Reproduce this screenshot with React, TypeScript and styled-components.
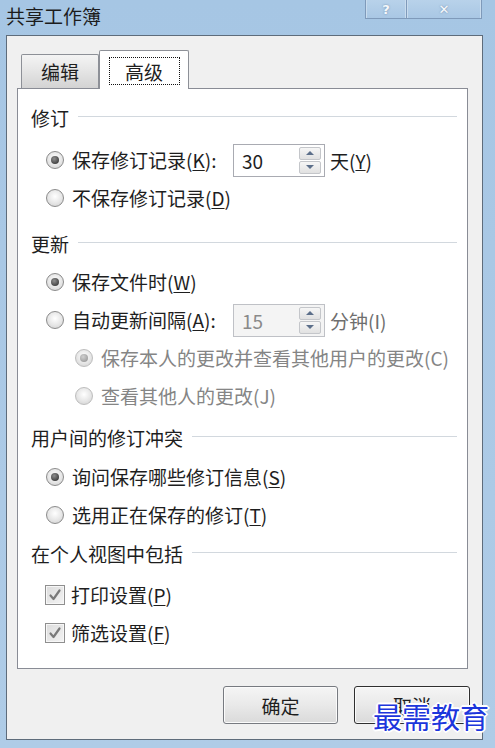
import styled, { createGlobalStyle } from "styled-components";

const GlobalStyle = createGlobalStyle`
  html, body {
    margin: 0;
    padding: 0;
  }
  body {
    background: #a9c8e5;
    font-family: "Noto Sans CJK SC", "Liberation Sans", sans-serif;
  }
`;

const Window = styled.div`
  position: relative;
  width: 495px;
  height: 748px;
  display: flex;
  flex-direction: column;
  background: linear-gradient(#a6c6e4, #afcce7);
  overflow: hidden;
`;

const TitleBar = styled.div`
  height: 35px;
  display: flex;
  justify-content: space-between;
  align-items: flex-start;
  flex: none;
`;

const Title = styled.div`
  margin: 6px 0 0 6px;
  font-size: 19px;
  line-height: 20px;
  color: #1c1c1c;
`;

const CaptionButtons = styled.div`
  display: flex;
  margin-right: 13px;
`;

const CaptionButton = styled.div<{ $w: number }>`
  width: ${(p) => p.$w}px;
  height: 19px;
  box-sizing: border-box;
  border: 1px solid #7f9aba;
  border-top: none;
  margin-left: -1px;
  background: linear-gradient(#b8d2ea, #a9c7e4);
  box-shadow: inset 1px 0 0 #c9dcee, inset -1px 0 0 #c9dcee;
  display: flex;
  align-items: center;
  justify-content: center;
  font-family: "DejaVu Sans", sans-serif;
  font-size: 13px;
  font-weight: bold;
  color: #f6f9fc;
  text-shadow: 0 0 2px #6d87a6;
`;

const Frame = styled.div`
  flex: 1;
  margin: 0 12px 8px 6px;
  border: 1px solid #5e6c7b;
  background: #f0f0f0;
  padding: 14px 14px 15px 10px;
  display: flex;
  flex-direction: column;
`;

const TabStrip = styled.div`
  height: 38px;
  display: flex;
  align-items: flex-end;
  padding-left: 4px;
  flex: none;
`;

const Tab = styled.div<{ $active?: boolean }>`
  position: relative;
  box-sizing: border-box;
  width: ${(p) => (p.$active ? 90 : 78)}px;
  height: ${(p) => (p.$active ? 39 : 34)}px;
  margin-bottom: ${(p) => (p.$active ? -1 : 0)}px;
  z-index: ${(p) => (p.$active ? 1 : 0)};
  border: 1px solid #8d9097;
  border-bottom: none;
  border-radius: 2px 2px 0 0;
  background: ${(p) =>
    p.$active ? "#ffffff" : "linear-gradient(#f4f4f4, #e6e6e6 45%, #d3d3d3)"};
  display: flex;
  justify-content: center;
  align-items: ${(p) => (p.$active ? "flex-start" : "center")};
  padding-top: ${(p) => (p.$active ? 6 : 0)}px;
  font-size: 19px;
  color: #1e1e1e;
`;

const FocusBox = styled.span`
  width: 71px;
  height: 28px;
  box-sizing: border-box;
  border: 1px dotted #111;
  display: flex;
  align-items: center;
  justify-content: center;
`;

const Panel = styled.div`
  height: 581px;
  box-sizing: border-box;
  flex: none;
  border: 1px solid #898c95;
  background: #ffffff;
  padding: 14px 10px 0 13px;
`;

const Section = styled.div<{ $top: number; $lead: number }>`
  margin-top: ${(p) => p.$top}px;
  & > div:nth-child(2) {
    margin-top: ${(p) => p.$lead}px;
  }
`;

const Heading = styled.div`
  height: 28px;
  display: flex;
  align-items: center;
  font-size: 19px;
  color: #1e1e1e;
  &::after {
    content: "";
    flex: 1;
    height: 1px;
    margin: 0 0 1px 9px;
    background: #d2d8de;
  }
`;

const OptionRow = styled.div<{ $indent: number }>`
  height: 38px;
  display: flex;
  align-items: center;
  padding-left: ${(p) => p.$indent}px;
`;

const RadioCircle = styled.span<{ $checked?: boolean; $disabled?: boolean }>`
  width: 18px;
  height: 18px;
  flex: none;
  box-sizing: border-box;
  border-radius: 50%;
  border: 1px solid ${(p) => (p.$disabled ? "#bdbdbd" : "#8b8b8b")};
  background: radial-gradient(circle at 50% 40%, #ffffff, #e6e6e6 55%, #cdcdcd);
  display: flex;
  align-items: center;
  justify-content: center;
  &::after {
    content: "";
    display: ${(p) => (p.$checked ? "block" : "none")};
    width: 8px;
    height: 8px;
    border-radius: 50%;
    background: ${(p) =>
      p.$disabled
        ? "radial-gradient(circle at 40% 35%, #d0d0d0, #8e8e8e)"
        : "radial-gradient(circle at 40% 35%, #8f8f8f, #262626)"};
  }
`;

const CheckBox = styled.span`
  width: 20px;
  height: 20px;
  flex: none;
  box-sizing: border-box;
  border: 1px solid #8f8f8f;
  background: linear-gradient(135deg, #dcdcdc, #f3f3f3);
  box-shadow: inset 0 0 0 1px #f7f7f7;
  display: flex;
  align-items: center;
  justify-content: center;
`;

const Label = styled.span<{ $width?: number; $muted?: boolean; $gap?: number }>`
  margin-left: ${(p) => p.$gap ?? 8}px;
  width: ${(p) => (p.$width ? `${p.$width}px` : "auto")};
  flex: none;
  font-size: 19px;
  line-height: 24px;
  white-space: nowrap;
  color: ${(p) => (p.$muted ? "#858585" : "#1e1e1e")};
  u {
    text-underline-offset: 2px;
  }
`;

const Spinner = styled.div<{ $disabled?: boolean }>`
  width: 92px;
  height: 33px;
  box-sizing: border-box;
  flex: none;
  border: 1px solid ${(p) => (p.$disabled ? "#bfc1c6" : "#a9abb2")};
  background: ${(p) => (p.$disabled ? "#f4f4f4" : "#ffffff")};
  display: flex;
  align-items: center;
  padding: 2px;
`;

const SpinValue = styled.span<{ $disabled?: boolean }>`
  flex: 1;
  padding-left: 6px;
  font-size: 19px;
  color: ${(p) => (p.$disabled ? "#8a8a8a" : "#1e1e1e")};
`;

const SpinButtons = styled.div`
  width: 22px;
  height: 27px;
  display: flex;
  flex-direction: column;
  gap: 1px;
  margin-right: 1px;
`;

const SpinButton = styled.div<{ $down?: boolean }>`
  flex: 1;
  box-sizing: border-box;
  border: 1px solid #c4c6ca;
  border-radius: 2px;
  background: linear-gradient(#f6f6f6, #e1e1e1);
  display: flex;
  align-items: center;
  justify-content: center;
  &::after {
    content: "";
    width: 0;
    height: 0;
    border-left: 4px solid transparent;
    border-right: 4px solid transparent;
    ${(p) =>
      p.$down ? "border-top: 4px solid #5c6f8a;" : "border-bottom: 4px solid #5c6f8a;"}
  }
`;

const Unit = styled.span<{ $muted?: boolean }>`
  margin-left: 5px;
  font-size: 19px;
  white-space: nowrap;
  color: ${(p) => (p.$muted ? "#6e6e6e" : "#1e1e1e")};
`;

const ButtonRow = styled.div`
  display: flex;
  justify-content: flex-end;
  gap: 16px;
  margin: 17px -2px 0 0;
`;

const DialogButton = styled.div<{ $default?: boolean }>`
  width: ${(p) => (p.$default ? 116 : 115)}px;
  height: 38px;
  box-sizing: border-box;
  border: 1px solid ${(p) => (p.$default ? "#2f2f2f" : "#777a80")};
  border-radius: 3px;
  background: linear-gradient(#f5f5f5, #e9e9e9 50%, #dadada);
  box-shadow: inset 0 0 0 1px #fbfbfb;
  display: flex;
  align-items: center;
  justify-content: center;
  font-size: 19px;
  color: #1e1e1e;
`;

const Watermark = styled.div`
  position: absolute;
  left: 373px;
  top: 698px;
  font-size: 29px;
  line-height: 36px;
  letter-spacing: 0px;
  color: #1c36dc;
  text-shadow: 1px 1px 0 #fff, -1px -1px 0 #fff, 1px -1px 0 #fff, -1px 1px 0 #fff,
    2px 0 0 #fff, -2px 0 0 #fff, 0 2px 0 #fff, 0 -2px 0 #fff;
`;

type RadioProps = {
  checked?: boolean;
  disabled?: boolean;
  indent?: number;
  children: React.ReactNode;
};

const Radio = ({ checked, disabled, indent = 15, children }: RadioProps) => (
  <OptionRow $indent={indent}>
    <RadioCircle $checked={checked} $disabled={disabled} />
    <Label $muted={disabled}>{children}</Label>
  </OptionRow>
);

const Check = ({ children }: { children: React.ReactNode }) => (
  <OptionRow $indent={14}>
    <CheckBox>
      <svg width="14" height="14" viewBox="0 0 14 14">
        <path
          d="M2.5 7.5 L5.5 11 L11.5 2.5"
          fill="none"
          stroke="#7a7a7a"
          strokeWidth="2.2"
          strokeLinecap="round"
          strokeLinejoin="round"
        />
      </svg>
    </CheckBox>
    <Label $gap={6}>{children}</Label>
  </OptionRow>
);

const SpinBox = ({ value, disabled }: { value: string; disabled?: boolean }) => (
  <Spinner $disabled={disabled}>
    <SpinValue $disabled={disabled}>{value}</SpinValue>
    <SpinButtons>
      <SpinButton />
      <SpinButton $down />
    </SpinButtons>
  </Spinner>
);

const App = () => {
  return (
    <>
      <GlobalStyle />
      <Window>
        <TitleBar>
          <Title>共享工作簿</Title>
          <CaptionButtons>
            <CaptionButton $w={42}>?</CaptionButton>
            <CaptionButton $w={76}>✕</CaptionButton>
          </CaptionButtons>
        </TitleBar>

        <Frame>
          <TabStrip>
            <Tab>编辑</Tab>
            <Tab $active>
              <FocusBox>高级</FocusBox>
            </Tab>
          </TabStrip>

          <Panel>
            <Section $top={0} $lead={10}>
              <Heading>修订</Heading>
              <OptionRow $indent={15}>
                <RadioCircle $checked />
                <Label $width={161}>
                  保存修订记录(<u>K</u>):
                </Label>
                <SpinBox value="30" />
                <Unit>
                  天(<u>Y</u>)
                </Unit>
              </OptionRow>
              <Radio>
                不保存修订记录(<u>D</u>)
              </Radio>
            </Section>

            <Section $top={12} $lead={6}>
              <Heading>更新</Heading>
              <Radio checked>
                保存文件时(<u>W</u>)
              </Radio>
              <OptionRow $indent={15}>
                <RadioCircle />
                <Label $width={161}>
                  自动更新间隔(<u>A</u>):
                </Label>
                <SpinBox value="15" disabled />
                <Unit $muted>分钟(I)</Unit>
              </OptionRow>
              <Radio checked disabled indent={44}>
                保存本人的更改并查看其他用户的更改(C)
              </Radio>
              <Radio disabled indent={44}>
                查看其他人的更改(J)
              </Radio>
            </Section>

            <Section $top={8} $lead={7}>
              <Heading>用户间的修订冲突</Heading>
              <Radio checked>
                询问保存哪些修订信息(<u>S</u>)
              </Radio>
              <Radio>
                选用正在保存的修订(<u>T</u>)
              </Radio>
            </Section>

            <Section $top={5} $lead={9}>
              <Heading>在个人视图中包括</Heading>
              <Check>
                打印设置(<u>P</u>)
              </Check>
              <Check>
                筛选设置(<u>F</u>)
              </Check>
            </Section>
          </Panel>

          <ButtonRow>
            <DialogButton>确定</DialogButton>
            <DialogButton $default>取消</DialogButton>
          </ButtonRow>
        </Frame>

        <Watermark>最需教育</Watermark>
      </Window>
    </>
  );
};

export default App;
